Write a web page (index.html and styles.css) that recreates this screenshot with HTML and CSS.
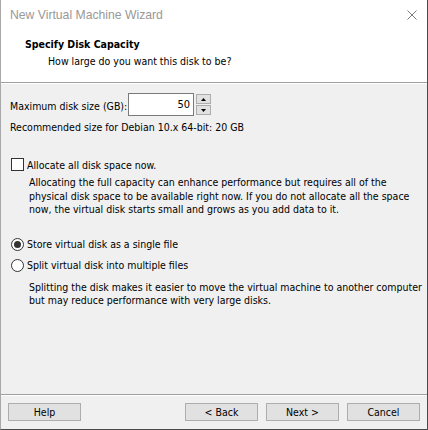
FILE: index.html
```html
<!DOCTYPE html>
<html>
<head>
<meta charset="utf-8">
<link rel="stylesheet" href="styles.css">
</head>
<body>
<div class="window">
  <div class="titlebar">
    <span class="title">New Virtual Machine Wizard</span>
    <svg class="close" width="10" height="10" viewBox="0 0 10 10"><path d="M0.5 0.5 L9.5 9.5 M9.5 0.5 L0.5 9.5" stroke="#7a7a7a" stroke-width="1" fill="none"/></svg>
  </div>
  <div class="header">
    <div class="h-title">Specify Disk Capacity</div>
    <div class="h-sub">How large do you want this disk to be?</div>
  </div>
  <div class="content">
    <div class="size-row">
      <span class="label">Maximum disk size (GB):</span>
      <div class="spin-input">50</div>
      <div class="spin-btns">
        <div class="spin-btn"><svg width="5" height="3" viewBox="0 0 5 3"><path d="M2.5 0 L5 3 L0 3 Z" fill="#000"/></svg></div>
        <div class="spin-btn"><svg width="5" height="3" viewBox="0 0 5 3"><path d="M0 0 L5 0 L2.5 3 Z" fill="#000"/></svg></div>
      </div>
    </div>
    <div class="recommend">Recommended size for Debian 10.x 64-bit: 20 GB</div>

    <div class="option check-row">
      <span class="checkbox"></span>
      <span>Allocate all disk space now.</span>
    </div>
    <div class="desc desc-alloc">Allocating the full capacity can enhance performance but requires all of the physical disk space to be available right now. If you do not allocate all the space now, the virtual disk starts small and grows as you add data to it.</div>

    <div class="option radio-row first">
      <span class="radio checked"></span>
      <span>Store virtual disk as a single file</span>
    </div>
    <div class="option radio-row second">
      <span class="radio"></span>
      <span>Split virtual disk into multiple files</span>
    </div>
    <div class="desc desc-split">Splitting the disk makes it easier to move the virtual machine to another computer but may reduce performance with very large disks.</div>
  </div>
  <div class="footer">
    <button class="btn">Help</button>
    <div class="spacer"></div>
    <button class="btn">&lt; Back</button>
    <button class="btn">Next &gt;</button>
    <button class="btn">Cancel</button>
  </div>
</div>
</body>
</html>
```

FILE: styles.css
```css
html, body {
  margin: 0;
  padding: 0;
  background: #f0f0f0;
}
body {
  width: 428px;
  height: 430px;
  overflow: hidden;
  font-family: "DejaVu Sans Condensed", "DejaVu Sans", sans-serif;
  font-size: 10.5px;
  color: #000;
}
.window {
  box-sizing: border-box;
  width: 428px;
  height: 430px;
  border-left: 1px solid #a8a8a8;
  border-right: 1px solid #4a4a4a;
  border-bottom: 1px solid #4a4a4a;
  background: #f0f0f0;
  display: flex;
  flex-direction: column;
}
.titlebar {
  height: 30px;
  flex: none;
  background: #fff;
  display: flex;
  align-items: center;
  justify-content: space-between;
  padding: 0 10px 0 9px;
}
.title {
  font-family: "Liberation Sans", Arial, sans-serif;
  font-size: 12.2px;
  color: #999;
}
.header {
  flex: none;
  background: #fff;
  height: 53px;
  border-bottom: 1px solid #a0a0a0;
  box-shadow: 0 1px 0 #fff;
  box-sizing: border-box;
  padding: 7px 0 0 24px;
}
.h-title {
  font-weight: bold;
  line-height: 15px;
}
.h-sub {
  padding-left: 23px;
  margin-top: 2px;
  line-height: 15px;
}
.content {
  flex: 1;
  padding: 10px 2px 0 9px;
}
.size-row {
  display: flex;
  align-items: center;
  height: 23px;
}
.label {
  width: 118px;
  padding-top: 2px;
}
.spin-input {
  box-sizing: border-box;
  width: 66px;
  height: 23px;
  border: 1px solid #7a7a7a;
  background: #fff;
  text-align: right;
  padding-right: 3px;
  line-height: 21px;
  font-size: 11px;
}
.spin-btns {
  display: flex;
  flex-direction: column;
  gap: 1px;
  margin-left: 2px;
}
.spin-btn {
  box-sizing: border-box;
  width: 15px;
  height: 10px;
  border: 1px solid #adadad;
  background: #e1e1e1;
  display: flex;
  align-items: center;
  justify-content: center;
}
.recommend {
  margin-top: 5px;
  line-height: 13px;
}
.option {
  display: flex;
  align-items: center;
  gap: 3px;
  height: 15px;
}
.check-row {
  margin-top: 23px;
}
.checkbox {
  box-sizing: border-box;
  width: 13px;
  height: 13px;
  border: 1px solid #333;
  background: #fff;
  margin-left: 1px;
}
.desc {
  padding-left: 19px;
  line-height: 13.5px;
}
.desc-alloc {
  margin-top: 4px;
}
.radio-row.first {
  margin-top: 20px;
}
.radio-row.second {
  margin-top: 6px;
}
.desc-split {
  margin-top: 8px;
}
.radio {
  box-sizing: border-box;
  width: 13px;
  height: 13px;
  border: 1px solid #333;
  border-radius: 50%;
  background: #fff;
  margin-left: 1px;
  display: flex;
  align-items: center;
  justify-content: center;
}
.radio.checked::after {
  content: "";
  width: 7px;
  height: 7px;
  border-radius: 50%;
  background: #333;
}
.footer {
  flex: none;
  border-top: 1px solid #a0a0a0;
  box-shadow: inset 0 1px 0 #fff;
  height: 35px;
  box-sizing: border-box;
  display: flex;
  align-items: flex-start;
  padding: 8px 7px 0 7px;
  gap: 8px;
}
.spacer {
  flex: 1;
}
.btn {
  box-sizing: border-box;
  width: 73px;
  height: 18px;
  border: 1px solid #adadad;
  background: #e1e1e1;
  font-family: "DejaVu Sans Condensed", "DejaVu Sans", sans-serif;
  font-size: 10.5px;
  color: #000;
  padding: 0;
  margin: 0;
}
```
